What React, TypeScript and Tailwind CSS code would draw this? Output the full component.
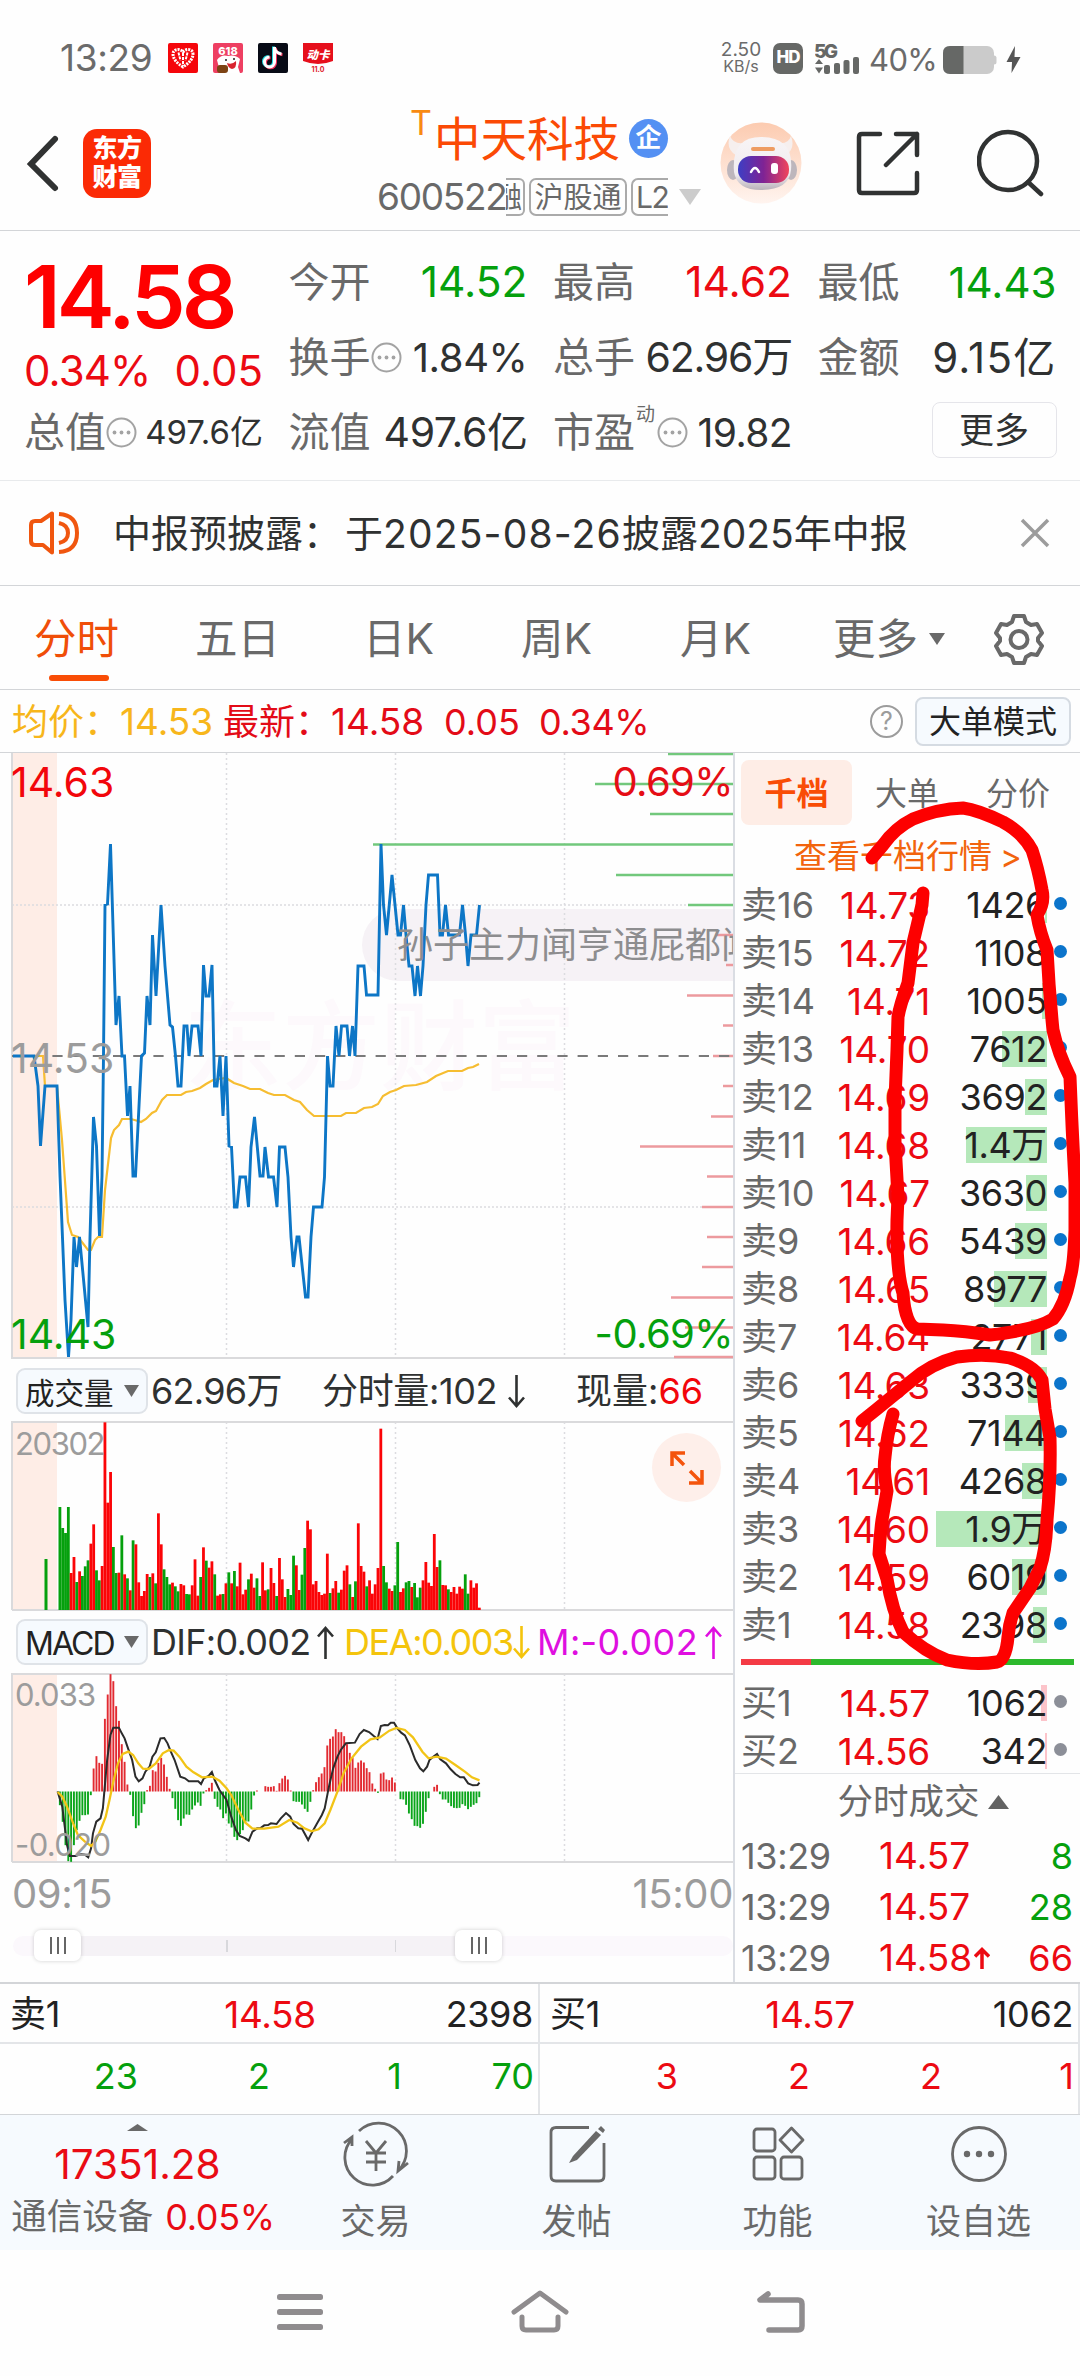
import type { ReactNode } from "react";

const PRICE =
  "13,1056 34,1056 38,1086 40.5,1146 45,1086 57,1086 60,1176 65,1300 68.5,1357 71,1320 74,1237 76.5,1267 79.5,1237 88,1327 90,1237 93.5,1117 96.5,1146 99.5,1236 102,1176 103.5,1056 105,905 107.5,904 110.5,844 116,1025 119,996 122,1056 124.5,1056 127.5,1116 130,1086 133,1176 135.5,1176 141.5,1056 144.5,1053 147,996 150,1025 152.5,935 156,996 161,905 165,966 170,1025 172.5,1027 175.5,1056 178,1086 181,1086 184,1026 187,1026 189,1056 192,1026 198,1026 201,1056 203.5,965 206,996 209,996 212,965 214.5,1086 217,1086 220,1056 223,1116 226,1056 229,1146 231.5,1147 234.5,1207 237,1207 240,1177 245.5,1177 248.5,1207 251,1147 254.5,1117 260,1176 263,1176 265,1147 268.5,1177 273.5,1177 277,1207 279.5,1147 285,1147 288,1177 291,1237 293.5,1267 297,1237 299,1237 305.5,1297 308,1297 311,1237 313.5,1207 322,1207 324.5,1177 327.5,1056 330,1086 333,1086 336,1026 339,1056 341.5,1026 347,1026 349.5,1056 352.5,1026 355,1056 358,966 364,966 366.5,995 378,995 381,844 383.5,905 386.5,935 392,875 398,935 400.5,935 403.5,905 406,935 409,966 412,966 415,996 417.5,966 420.5,996 423,966 426,905 428.5,875 437.5,875 440,935 442.5,935 445.5,905 448.5,935 459.5,935 462.5,905 465.5,935 468,966 471,935 476.5,935 479.5,905";

const AVERAGE =
  "34,1056 43,1056 45,1086 57,1086 62,1140 68,1222 72,1235 78,1237 88,1250 91,1250 95,1240 98,1237 102,1237 105,1190 111,1138 114,1130 119,1125 122,1119 131,1119 138,1121 141,1122 146,1119 152,1113 156,1111 162,1100 167,1095 181,1095 186,1092 192,1091 200,1088 206,1084 213,1080 226,1078 234,1083 243,1086 250,1089 260,1089 268,1093 274,1095 285,1095 294,1100 300,1102 307,1110 314,1116 341,1116 346,1113 356,1113 364,1108 372,1107 378,1104 383,1096 390,1092 396,1090 404,1086 416,1085 427,1082 436,1076 448,1071 462,1071 468,1068 473,1067 479,1064";

// [left edge, y, side]
const LEVELS: [number, number, "s" | "b"][] = [
  [668, 754, "s"], [595, 784, "s"], [650, 814, "s"], [373, 844.5, "s"], [616, 875, "s"], [688, 905, "s"],
  [715, 935, "b"], [726, 965, "b"], [687, 995.5, "b"], [723, 1025.5, "b"], [713, 1056, "b"], [723, 1086, "b"],
  [711, 1116.5, "b"], [640, 1146.5, "b"], [707, 1176.5, "b"], [702, 1207, "b"], [707, 1237, "b"],
  [702, 1267, "b"], [671, 1297.5, "b"], [685, 1327.5, "b"], [674, 1357, "b"],
];

// Bar height per minute; negative marks a falling minute.
const VOLUME = [
  -309, -246, -231, -309, 111, 159, -84, 116, -102, -131, -149, 199, 257, -119, -89, 132, 563, 322, 414, -189,
  -111, 112, -224, 107, -95, 59, -209, 197, 83, 42, 57, 108, -99, 110, -80, 290, 197, -122, -99, -77,
  82, -71, -56, 78, 74, -48, -47, 74, 152, 43, -99, 188, -148, 127, 146, -107, 43, 47, -48, 80,
  -113, 80, -117, 71, 142, 47, 61, -92, 109, 67, -95, -42, 143, 59, -62, 126, 81, -42, 156, 92,
  39, -63, -45, -163, 134, 60, -106, -186, 268, 242, 77, 87, 54, 45, 49, 169, -51, 65, 87, -52,
  61, 118, 134, -77, 39, -86, 260, 132, 115, -71, 89, 49, 77, 126, 544, -132, -83, 64, 57, -74,
  -204, 54, 65, -83, -87, 69, -81, -38, -67, 89, 144, 82, 72, 228, 129, -149, 75, 74, -62, 54,
  69, 49, 70, 64, -107, -49, 89, 67, 80, 7,
];

const MACD = [
  -41, -91, -161, -209, -211, -161, -116, -88, -71, -71, -69, -11, 69, 106, 86, 83, 218, 291, 352, 331,
  256, 212, 142, 89, 21, -10, -74, -110, -102, -64, -38, 4, 17, 64, 60, 86, 101, 81, 44, 8,
  -20, -52, -86, -103, -81, -69, -70, -54, -42, -33, -43, -6, 4, 11, 26, -22, -46, -54, -80, -66,
  -96, -108, -136, -146, -128, -116, -90, -90, -54, -12, 3, 0, 0, 16, 14, 14, 16, 2, 25, 39,
  47, 36, 3, -29, -31, -31, -39, -52, -61, -31, 4, 28, 43, 54, 73, 138, 158, 165, 187, 178,
  178, 166, 142, 116, 102, 71, 87, 93, 87, 70, 58, 24, 8, -4, 54, 57, 36, 34, 42, 27,
  0, -23, -24, -40, -66, -83, -103, -104, -109, -97, -61, -20, 0, 14, 20, -8, -24, -24, -34, -44,
  -49, -50, -49, -38, -43, -53, -46, -40, -35, -17,
];

const DIF =
  "122,574 132,620 142,735 148,768 160,768 172,762 180,764 187,772 193,745 197,700 204,665 213,655 218,625 222,560 227,480 234,405 240,383 252,383 258,400 264,415 270,440 280,480 287,530 294,544 302,535 308,515 317,500 323,470 330,457 340,415 348,414 355,430 362,455 370,480 382,530 392,535 400,544 420,544 426,552 432,535 442,528 449,516 455,540 465,570 480,600 490,650 500,690 508,708 520,715 527,722 535,695 545,685 552,684 560,676 568,675 574,670 586,672 595,655 606,639 615,650 622,672 632,685 640,686 653,720 662,695 672,670 682,645 688,625 697,560 706,505 715,470 722,450 733,430 752,428 762,402 771,390 782,396 792,408 800,417 807,378 815,375 822,376 828,368 835,368 842,385 850,398 858,406 868,435 880,480 890,505 897,514 905,500 910,480 918,470 926,462 933,478 945,490 955,508 965,522 975,532 983,532 992,550 1002,556 1012,555 1016,548";

const DEA =
  "122,576 132,590 142,620 155,670 165,705 180,725 193,738 202,725 213,690 224,650 232,600 240,545 250,490 260,462 272,455 282,465 293,490 303,506 315,507 330,490 345,460 358,450 368,452 380,470 395,500 410,517 428,532 450,530 465,542 480,565 490,585 505,630 520,668 535,686 560,686 590,680 613,660 630,668 645,685 660,694 675,688 688,670 700,630 715,575 728,520 745,475 765,440 785,418 805,412 825,392 840,384 858,390 875,412 895,455 908,475 925,470 945,476 965,495 985,515 1000,532 1016,541";

// [label, price, volume, depth bar width]
const SELLS: [string, string, string, number][] = [
  ["卖16", "14.73", "1426", 2], ["卖15", "14.72", "1108", 2], ["卖14", "14.71", "1005", 5], ["卖13", "14.70", "7612", 45],
  ["卖12", "14.69", "3692", 22], ["卖11", "14.68", "1.4万", 81], ["卖10", "14.67", "3630", 21], ["卖9", "14.66", "5439", 32],
  ["卖8", "14.65", "8977", 53], ["卖7", "14.64", "2771", 16], ["卖6", "14.63", "3339", 19], ["卖5", "14.62", "7144", 42],
  ["卖4", "14.61", "4268", 25], ["卖3", "14.60", "1.9万", 111], ["卖2", "14.59", "6019", 35], ["卖1", "14.58", "2398", 14],
];
const BUYS: [string, string, string, number][] = [
  ["买1", "14.57", "1062", 6], ["买2", "14.56", "342", 2],
];

const LOOP_TOP =
  "M872 858 L883 845 Q895 828 913 819 Q937 809 963 808 Q978 810 1003 822 Q1023 833 1032 850 Q1038 868 1042 890 Q1045 903 1037 915 Q1040 933 1047 950 Q1049 990 1053 1030 Q1058 1053 1070 1077 Q1072 1130 1075 1183 L1075 1230 Q1074 1265 1070 1278 Q1065 1305 1053 1319 Q1035 1330 990 1335 Q965 1331 943 1330 L917 1329 Q905 1325 903 1293 Q896 1270 897 1220 L898 1197 L895 1143 L895 1100 L897 1050 L898 1017 Q900 1005 908 983 L913 943 L922 905 L923 893";
const LOOP_BOTTOM =
  "M862 1421 L877 1409 L910 1382 Q930 1364 957 1357 Q985 1353 1010 1358 Q1035 1366 1042 1380 L1045 1409 L1050 1438 Q1051 1477 1047 1520 Q1046 1550 1040 1568 L1030 1588 L1013 1613 Q1009 1625 1008 1637 Q1006 1660 997 1662 Q975 1666 947 1660 Q925 1652 903 1632 Q892 1610 887 1579 L879 1554 Q880 1535 882 1520 L887 1491 Q883 1470 885 1457 Q887 1435 893 1414";

function Dots() {
  return (
    <svg className="h-[31px] w-[31px] shrink-0" viewBox="0 0 31 31">
      <circle cx="15.5" cy="15.5" r="14" fill="none" stroke="#a3a3a3" strokeWidth="2" />
      <circle cx="8.5" cy="15.5" r="1.9" fill="#a3a3a3" />
      <circle cx="15.5" cy="15.5" r="1.9" fill="#a3a3a3" />
      <circle cx="22.5" cy="15.5" r="1.9" fill="#a3a3a3" />
    </svg>
  );
}

function StatusBar() {
  return (
    <div className="flex h-24 items-center pt-5 pl-[60px] text-[#6b6b6b]">
      <span className="w-[108px] text-[37px] tracking-[-0.01em]">13:29</span>
      <svg className="h-[30px] w-[30px]" viewBox="0 0 30 30">
        <rect width="30" height="30" rx="2" fill="#f5060b" />
        <path d="M15 24 C9 20 5 16 5 11 C5 6 12 5 15 9 C18 5 25 6 25 11 C25 16 21 20 15 24Z" fill="none" stroke="#fff" strokeWidth="3" strokeDasharray="2 1" />
        <path d="M15 10v11M10.500 9.500l2 8M19.500 9.500l-2 8" stroke="#fff" strokeWidth="2" strokeDasharray="3 1" />
      </svg>
      <svg className="ml-[15px] h-[30px] w-[30px]" viewBox="0 0 30 30">
        <rect width="30" height="30" rx="2" fill="#ee3f62" />
        <path d="M4 17 Q8 11 15 13 Q22 11 27 16 L25 24 L27 30 L9 30 Q5 24 4 17Z" fill="#fff" />
        <circle cx="13" cy="17" r="1" fill="#222" /><circle cx="21" cy="16" r="1" fill="#222" />
        <path d="M14 20 Q19 22 23 18 Q24 25 19 26 Q15 25 14 20Z" fill="#d9232f" />
        <rect x="4" y="22" width="11" height="8" rx="3" fill="#7d4314" />
        <text x="15" y="12" textAnchor="middle" fontSize="11" fontWeight="800" fill="#fff">618</text>
      </svg>
      <svg className="ml-[15px] h-[30px] w-[30px]" viewBox="0 0 30 30">
        <rect width="30" height="30" rx="2" fill="#080b16" />
        <g fill="none" strokeWidth="3">
          <path d="M16.500 4v15a5 5 0 1 1-5-5M16.500 5q1 5 7 6" stroke="#25d9e0" transform="translate(-1 -.6)" />
          <path d="M16.500 4v15a5 5 0 1 1-5-5M16.500 5q1 5 7 6" stroke="#f0315b" transform="translate(1 .8)" />
          <path d="M16.500 4v15a5 5 0 1 1-5-5M16.500 5q1 5 7 6" stroke="#fff" />
        </g>
      </svg>
      <svg className="ml-[15px] h-[30px] w-[30px]" viewBox="0 0 30 30">
        <path d="M0 0H30V18Q15 24 0 18Z" fill="#e60f1c" />
        <text x="15" y="16" textAnchor="middle" fontSize="11.500" fontWeight="800" fill="#fff" fontStyle="italic">动卡</text>
        <text x="15" y="29" textAnchor="middle" fontSize="7" fontWeight="700" fill="#e0202c">11.0</text>
      </svg>
      <div className="ml-[388px] flex w-[40px] flex-col items-center leading-none">
        <span className="text-[19px] leading-[17px]">2.50</span>
        <span className="text-[16px] leading-[17px]">KB/s</span>
      </div>
      <div className="ml-[12px] flex h-[31px] w-[30px] items-center justify-center rounded-[7px] bg-[#666866] text-[17px] font-extrabold tracking-[-0.06em] text-white">HD</div>
      <svg className="ml-[12px] h-[31px] w-[44px]" viewBox="0 0 44 31" fill="#666866">
        <text x="-1" y="14.500" fontSize="19" fontWeight="800" textLength="24">5G</text>
        <path d="M0 21h8l-4-5zM0 24.500h8l-4 6z" />
        <rect x="9" y="22" width="6" height="9" rx="2" />
        <rect x="19" y="20" width="6" height="11" rx="2" />
        <rect x="28.500" y="17" width="6" height="14" rx="2" />
        <rect x="38" y="14" width="6" height="17" rx="2" />
      </svg>
      <span className="ml-[10px] w-[68px] pt-1 text-[31px] tracking-[-0.02em]">40%</span>
      <svg className="mt-1 ml-[5px] h-[28px] w-[80px]" viewBox="0 0 80 28">
        <rect x="1" width="51" height="28" rx="7" fill="#cbcbcb" />
        <path d="M8 0H21.500V28H8Q1 28 1 21V7Q1 0 8 0Z" fill="#666866" />
        <path d="M51 9.500h1q2.500 0 2.500 2.500v4q0 2.500-2.500 2.500h-1z" fill="#cbcbcb" />
        <path d="M73 0 64.500 16H70L69.500 27 78.500 11H72.500Z" fill="#555" />
      </svg>
    </div>
  );
}

function Header() {
  return (
    <div className="flex h-[135px] items-center border-b border-[#d3d5d8] pl-[26px]">
      <svg className="h-[60px] w-[34px]" viewBox="0 0 34 60" fill="none" stroke="#303232" strokeWidth="6" strokeLinecap="round">
        <path d="M29 6 5 31 29 55" />
      </svg>
      <div className="ml-[23px] flex h-[69px] w-[68px] flex-col items-center justify-center rounded-[14px] bg-[#fb2a05] text-[25px] leading-[29px] font-black tracking-[-0.02em] text-white">
        <span>东方</span>
        <span>财富</span>
      </div>
      <div className="ml-[226px] flex w-[343px] flex-col gap-[10px]">
        <div className="flex h-[58px] items-center pl-[33px]">
          <span className="self-start text-[34px] leading-[28px] text-[#f88a12]">T</span>
          <span className="ml-[2px] pt-[2px] text-[46.500px] leading-none text-[#fb4a05]">中天科技</span>
          <span className="ml-[9px] flex h-[39px] w-[39px] items-center justify-center rounded-full bg-[#5490f3] text-[26px] leading-none font-bold text-white">企</span>
        </div>
        <div className="flex h-[40px] items-center text-[#696969]">
          <span className="w-[129px] text-[37px] tracking-[-0.035em]">600522</span>
          <span className="flex h-[38px] w-[19px] items-center justify-end overflow-hidden rounded-r-[6px] border-y-2 border-r-2 border-[#aaa] pr-[1px] text-[29px] leading-none">融</span>
          <span className="ml-[4px] flex h-[38px] w-[98px] items-center justify-center rounded-[7px] border-2 border-[#aaa] text-[29px] leading-none">沪股通</span>
          <span className="ml-[4px] flex h-[38px] w-[37px] items-center overflow-hidden rounded-l-[7px] border-y-2 border-l-2 border-[#aaa] pl-[3px] text-[30px] leading-none tracking-[-0.05em]">L2</span>
          <svg className="ml-[11px] h-[16px] w-[22px]" viewBox="0 0 22 16"><path d="M0 0H22L11 16Z" fill="#ccc" /></svg>
        </div>
      </div>
      <svg className="h-[82px] w-[82px]" viewBox="0 0 82 82">
        <defs>
          <linearGradient id="halo" x1="0" y1="0" x2="0" y2="1"><stop offset="0" stopColor="#fccbb0" /><stop offset="1" stopColor="#fff4ef" /></linearGradient>
          <linearGradient id="visor"><stop offset="0" stopColor="#3d3ec4" /><stop offset=".5" stopColor="#7f2394" /><stop offset="1" stopColor="#f1455c" /></linearGradient>
          <linearGradient id="shell" x1="0" y1="0" x2="0" y2="1"><stop offset="0" stopColor="#f8f4f5" /><stop offset=".7" stopColor="#f0ecf0" /><stop offset="1" stopColor="#b9b2ba" /></linearGradient>
        </defs>
        <circle cx="41" cy="41" r="40.500" fill="url(#halo)" />
        <path d="M10 14Q5 27 17 34L28 20Q14 24 10 14ZM71 14Q76 27 65 34L54 20Q68 24 71 14Z" fill="#f6efee" />
        <ellipse cx="13" cy="48" rx="6" ry="10" fill="#bdb6bc" /><ellipse cx="71" cy="48" rx="6" ry="10" fill="#bdb6bc" />
        <path d="M14 50Q11 15 41 15Q74 15 71 48Q69 68 41 68Q17 68 14 50Z" fill="url(#shell)" />
        <rect x="18" y="34" width="51" height="27" rx="13" fill="url(#visor)" />
        <path d="M31 50q4-8 8 0" stroke="#fff" strokeWidth="2.500" fill="none" strokeLinecap="round" />
        <rect x="51" y="41" width="7" height="11" rx="3" fill="#fff" />
        <path d="M33 27h20" stroke="#ee9c62" strokeWidth="4" strokeLinecap="round" />
      </svg>
      <svg className="ml-[54px] h-[66px] w-[64px]" viewBox="0 0 64 66" fill="none" stroke="#303232" strokeWidth="4.500" strokeLinecap="round" strokeLinejoin="round">
        <path d="M24 4H6Q3 4 3 7V60Q3 63 6 63H58Q61 63 61 60V43M40 4H61V25M61 4 30 35" />
      </svg>
      <svg className="ml-[57px] h-[68px] w-[68px]" viewBox="0 0 68 68" fill="none" stroke="#303232" strokeWidth="4.500" strokeLinecap="round">
        <circle cx="31" cy="32" r="29" /><path d="M51 53 64 65" />
      </svg>
    </div>
  );
}

function Cell({ label, extra, value, tone = "text-[#2f3131]", size = "text-[41px] tracking-[-0.01em]" }: { label: string; extra?: ReactNode; value: string; tone?: string; size?: string }) {
  return (
    <div className="flex h-[75px] items-center whitespace-nowrap">
      <span className="text-[41px] text-[#696969]">{label}</span>
      {extra}
      <span className={`ml-auto ${tone} ${size}`}>{value}</span>
    </div>
  );
}

function Quote() {
  return (
    <div className="grid h-[250px] grid-cols-[239px_239px_239px_239px] gap-x-[25.500px] border-b border-[#e8eaec] pt-[14px] pl-[24px] leading-none">
      <div>
        <div className="flex h-[105px] items-center pb-[2px] text-[87px] font-semibold tracking-[-0.045em] text-[#fe0000]">14.58</div>
        <div className="flex h-[45px] items-center justify-between pb-[3px] text-[42px] text-[#ec0a12]"><span className="tracking-[-0.02em]">0.34%</span><span>0.05</span></div>
        <Cell label="总值" extra={<Dots />} value="497.6亿" size="text-[33px] tracking-[0em]" />
      </div>
      <div>
        <Cell label="今开" value="14.52" tone="text-[#05a00d]" size="text-[42.500px]" />
        <Cell label="换手" extra={<Dots />} value="1.84%" size="text-[40px] tracking-[-0.01em]" />
        <Cell label="流值" value="497.6亿" />
      </div>
      <div>
        <Cell label="最高" value="14.62" tone="text-[#ec0a12]" size="text-[42.500px]" />
        <Cell label="总手" value="62.96万" size="text-[41px] tracking-[-0.03em]" />
        <Cell label="市盈" extra={<><span className="-mt-9 ml-[1px] text-[19px] text-[#696969]">动</span><span className="ml-[2px] flex"><Dots /></span></>} value="19.82" size="text-[39px] tracking-[-0.015em]" />
      </div>
      <div>
        <Cell label="最低" value="14.43" tone="text-[#05a00d]" size="text-[42px] tracking-[0em]" />
        <Cell label="金额" value="9.15亿" size="text-[42px] tracking-[0.03em]" />
        <div className="flex h-[75px] items-center justify-end">
          <span className="-mt-[5px] flex h-[56px] w-[125px] items-center justify-center rounded-[8px] border-[1.500px] border-[#e5e5ea] text-[35px] text-[#2f3131]">更多</span>
        </div>
      </div>
    </div>
  );
}

function Notice() {
  return (
    <div className="flex h-[105px] items-center border-b border-[#d3d5d8] pl-[29px] leading-none">
      <svg className="h-[44px] w-[51px]" viewBox="0 0 51 44" fill="none" stroke="#f0560f" strokeWidth="4">
        <path d="M23 2.500V41.500L14 34H6Q2 34 2 30V14Q2 10 6 10H12Z" strokeLinejoin="round" />
        <path d="M30 12Q39 14 39 22Q39 30 30 32M30 3Q48 4 48 22Q48 40 30 41" />
      </svg>
      <span className="ml-[33px] flex items-center text-[38px] whitespace-nowrap text-[#2f3131]">
        中报预披露：<span className="ml-[4px]">于</span>
        <span className="text-[39px] tracking-[0.03em]">2025-08-26</span>披露
        <span className="text-[39px]">2025</span>年中报
      </span>
      <svg className="ml-auto mr-[30px] h-[30px] w-[30px]" viewBox="0 0 30 30" stroke="#9c9c9c" strokeWidth="3.500"><path d="M2 2 28 28M28 2 2 28" /></svg>
    </div>
  );
}

function Tabs() {
  return (
    <div className="flex h-[104px] items-center border-b border-[#d3d5d8] pt-[3px] text-[42.500px] leading-none whitespace-nowrap text-[#696969]">
      <div className="relative ml-[34px] w-[161px] text-[#f04e08]">
        分时
        <span className="absolute top-[57px] left-[15px] h-[6px] w-[60px] rounded-full bg-[#f94d06]" />
      </div>
      <span className="w-[168px]">五日</span>
      <span className="w-[158px]">日K</span>
      <span className="w-[159px]">周K</span>
      <span className="w-[153px]">月K</span>
      <span>更多</span>
      <svg className="ml-[11px] h-[12px] w-[16px]" viewBox="0 0 16 12"><path d="M0 0H16L8 12Z" fill="#696969" /></svg>
      <svg className="ml-[48px] h-[52px] w-[52px]" viewBox="0 0 52 52" fill="none" stroke="#696969" strokeWidth="4" strokeLinejoin="round">
        <path d="M21 3H31L33 9 38 12 44 11 49 20 45 25V28L49 33 44 42 38 41 33 44 31 50H21L19 44 14 41 8 42 3 33 7 28V25L3 20 8 11 14 12 19 9Z" />
        <circle cx="26" cy="26.500" r="8.500" />
      </svg>
    </div>
  );
}

function InfoRow() {
  return (
    <div className="flex h-[63px] items-center border-b border-[#d3d5d8] pt-px pl-[12px] text-[36px] leading-none whitespace-nowrap text-[#e30b17]">
      <span className="text-[#f7b61b]">均价：</span>
      <span className="w-[103px] text-[37px] text-[#f7b61b]">14.53</span>
      <span>最新：</span>
      <span className="w-[113px] text-[37px]">14.58</span>
      <span className="w-[95px]">0.05</span>
      <span className="tracking-[-0.01em]">0.34%</span>
      <span className="ml-auto flex h-[33px] w-[33px] items-center justify-center rounded-full border-[2.500px] border-[#9c9c9c] text-[25px] text-[#9c9c9c]">?</span>
      <span className="mr-[9px] ml-[12px] flex h-[49px] w-[156px] items-center justify-center rounded-[8px] border-2 border-[#d5dbe2] bg-[#f6fafe] text-[32px] text-[#222]">大单模式</span>
    </div>
  );
}

function Grid({ top, bottom }: { top: number; bottom: number }) {
  return (
    <>
      <rect x="12" y={top} width="45" height={bottom - top} fill="#feede6" />
      <path d={`M226.500 ${top}V${bottom}M395.500 ${top}V${bottom}M564.500 ${top}V${bottom}`} stroke="#dcdce0" strokeWidth="1.500" strokeDasharray="2 3" />
    </>
  );
}

function Picker({ children }: { children: ReactNode }) {
  return (
    <span className="flex h-[46px] w-[132px] shrink-0 items-center justify-between rounded-[9px] border-2 border-[#dfe3e8] bg-[#f6fafe] pr-[7px] pl-[7px] text-[#222]">
      <span>{children}</span>
      <svg className="h-[12px] w-[15px]" viewBox="0 0 15 12"><path d="M0 0H15L7.500 12Z" fill="#696969" /></svg>
    </span>
  );
}

function Arrow({ up }: { up?: boolean }) {
  return (
    <svg className={up ? "h-[33px] w-[17px]" : "h-[33px] w-[17px] rotate-180"} viewBox="0 0 17 33" fill="none" stroke="currentColor" strokeWidth="2.600">
      <path d="M8.500 33V2M1 10.500 8.500 2 16 10.500" />
    </svg>
  );
}

function Handle() {
  return (
    <span className="z-10 flex h-[31px] w-[47px] items-center justify-center gap-[5px] rounded-[7px] bg-white shadow-[0_0_4px_rgba(0,0,0,0.18)]">
      <i className="h-[17px] w-[2px] bg-[#666]" />
      <i className="h-[17px] w-[2px] bg-[#666]" />
      <i className="h-[17px] w-[2px] bg-[#666]" />
    </span>
  );
}

function Charts() {
  return (
    <div className="w-[735px] shrink-0 border-r-2 border-[#dadde3] leading-none">
      <div className="relative h-[606px] overflow-hidden">
        <div className="absolute top-[245px] left-[184px] text-[98px] font-medium text-[#fdf9fc]">东方财富</div>
        <div className="absolute top-[156px] left-[362px] h-[72px] w-[420px] rounded-full bg-[#f6f2f6]" />
        <svg className="absolute inset-0 h-[606px] w-[733px]" viewBox="0 753 733 606" fill="none">
          <Grid top={753} bottom={1358} />
          <path d="M12 905H733M12 1207H733" stroke="#dcdce0" strokeWidth="1.500" strokeDasharray="2 2" />
          <path d="M12 753V1358H733" stroke="#dadadc" strokeWidth="2" />
          {LEVELS.map(([x, y, side]) => (
            <path key={y} d={`M${x} ${y}H733`} stroke={side === "s" ? "#72c87c" : "#ec9a9e"} strokeWidth="2.500" />
          ))}
          <path d="M12 1056H733" stroke="#7a7a7a" strokeWidth="2" strokeDasharray="10.200 10" />
          <polyline points={AVERAGE} stroke="#f6bd31" strokeWidth="2.200" />
          <polyline points={PRICE} stroke="#0d76c6" strokeWidth="2.900" />
        </svg>
        <span className="absolute top-[174px] left-[397px] text-[36px] whitespace-nowrap text-[#8d8d8f]">孙子主力闻亨通屁都闻</span>
        <span className="absolute top-[9px] left-[11px] text-[41px] text-[#f2060b]">14.63</span>
        <span className="absolute top-[9px] right-0 text-[40px] tracking-[-0.015em] text-[#e50d15]">0.69%</span>
        <span className="absolute top-[285px] left-[11px] text-[41px] text-[#9c9c9c]">14.53</span>
        <span className="absolute top-[561px] left-[11px] text-[41px] text-[#05a00d]">14.43</span>
        <span className="absolute top-[561px] right-0 text-[40px] tracking-[-0.015em] text-[#05a00d]">-0.69%</span>
      </div>

      <div className="flex h-[62px] items-center pt-[2px] pl-[16px] text-[36px] whitespace-nowrap text-[#2f3131]">
        <Picker><span className="text-[29.500px]">成交量</span></Picker>
        <span className="ml-[3px] w-[171px] tracking-[-0.02em]">62.96万</span>
        <span className="flex w-[254px] items-center tracking-[-0.01em]">分时量:102<span className="ml-[11px] flex"><Arrow /></span></span>
        <span>现量:</span><span className="text-[#f2060b]">66</span>
      </div>

      <div className="relative h-[190px]">
        <svg className="absolute inset-0 h-[190px] w-[733px]" viewBox="0 1421 733 190" fill="none">
          <Grid top={1422} bottom={1609} />
          <path d="M12 1610V1422H733M12 1610H733" stroke="#dadadc" strokeWidth="2" />
          <rect x="44.500" y="1559" width="3" height="51" fill="#05a00d" />
          {VOLUME.map((v, i) => {
            const h = Math.abs(v) / 3;
            return <rect key={i} x={58.5 + i * 2.815} y={1610 - h} width="2.800" height={h} fill={v > 0 ? "#fb0407" : "#05a00d"} />;
          })}
        </svg>
        <span className="absolute top-[7px] left-[15px] text-[31px] tracking-[-0.045em] text-[#9c9c9c]">20302</span>
        <span className="absolute top-[12px] left-[652px] flex h-[69px] w-[69px] items-center justify-center rounded-full bg-[#feefea]">
          <svg className="h-[34px] w-[34px]" viewBox="0 0 34 34" fill="none" stroke="#f4540c" strokeWidth="3.500"><path d="M2 15V2H15M2 2 14 14M32 19V32H19M32 32 20 20" /></svg>
        </span>
      </div>

      <div className="flex h-[62px] items-center pl-[16px] text-[36px] tracking-[-0.02em] whitespace-nowrap">
        <Picker><span className="text-[32px] tracking-[-0.06em]">MACD</span></Picker>
        <span className="ml-[3px] flex w-[193px] items-center text-[#2f3131]">DIF:0.002<span className="ml-auto mr-[10px] flex"><Arrow up /></span></span>
        <span className="flex w-[193px] items-center tracking-[-0.04em] text-[#f4c40c]">DEA:0.003<span className="ml-auto mr-[11px] flex"><Arrow /></span></span>
        <span className="flex w-[185px] items-center tracking-[0.01em] text-[#df0fe0]">M:-0.002<span className="ml-auto flex"><Arrow up /></span></span>
      </div>

      <div className="relative h-[190px]">
        <svg className="absolute inset-0 h-[190px] w-[733px]" viewBox="0 1673 733 190" fill="none">
          <Grid top={1674} bottom={1861} />
          <path d="M12 1862V1674H733M12 1862H733" stroke="#dadadc" strokeWidth="2" />
          {MACD.map((v, i) => {
            const h = Math.abs(v) / 3;
            return <rect key={i} x={58.9 + i * 2.815} y={v > 0 ? 1791.5 - h : 1791.5} width="1.900" height={h} fill={v > 0 ? "#e22a31" : "#0aa51a"} />;
          })}
          <g transform="translate(0 1600) scale(.47193 .33333)">
            <polyline points={DIF} stroke="#2b2b2b" strokeWidth="2" vectorEffect="non-scaling-stroke" />
            <polyline points={DEA} stroke="#f2c416" strokeWidth="2.300" vectorEffect="non-scaling-stroke" />
          </g>
        </svg>
        <span className="absolute top-[6px] left-[15px] text-[31px] tracking-[-0.03em] text-[#9c9c9c]">0.033</span>
        <span className="absolute top-[156px] left-[15px] text-[31px] tracking-[-0.02em] text-[#9c9c9c]">-0.020</span>
      </div>

      <div className="flex h-[62px] items-center justify-between pl-[12px] text-[40px] tracking-[-0.01em] text-[#9c9c9c]">
        <span>09:15</span><span>15:00</span>
      </div>
      <div className="mt-[5px] flex h-[31px] items-center pl-[13px]">
        <span className="h-5 w-[21px] rounded-l-full bg-[#fbf8fc]" />
        <Handle />
        <span className="-ml-1 flex h-5 w-[384px] items-center bg-[#f5f2f6]">
          <i className="ml-[149px] h-3 w-[1.500px] bg-[#d8d8dc]" />
          <i className="ml-[167px] h-3 w-[1.500px] bg-[#d8d8dc]" />
        </span>
        <span className="-ml-[6px] flex"><Handle /></span>
        <span className="h-5 flex-1 rounded-r-full bg-[#fbf8fc]" />
      </div>
    </div>
  );
}

function Order({ row, sell }: { row: [string, string, string, number]; sell?: boolean }) {
  const [label, price, volume, bar] = row;
  return (
    <div className="flex h-12 items-center whitespace-nowrap">
      <span className="w-[88px] pb-[2px] text-[#696969]">{label}</span>
      <span className="w-[101px] pb-[2px] text-right text-[37px] tracking-[-0.005em] text-[#ec0a12]">{price}</span>
      <span className="relative mb-[2px] flex h-[36px] w-[117px] items-center justify-end tracking-[-0.01em] text-[#222]">
        <i className={sell ? "absolute top-0 right-0 h-full bg-[#b5e8ba]" : "absolute top-0 right-0 h-full bg-[#fcc4ca]"} style={{ width: bar }} />
        <span className="relative">{volume}</span>
      </span>
      <i className={sell ? "mb-[5px] ml-[7px] h-[13px] w-[13px] rounded-full bg-[#0b74cb]" : "mb-[5px] ml-[7px] h-[13px] w-[13px] rounded-full bg-[#8c8f98]"} />
    </div>
  );
}

function OrderBook() {
  return (
    <div className="flex-1 text-[36px] leading-none">
      <div className="flex h-[77px] items-center pt-[2px] pl-[6px] text-[32px] text-[#696969]">
        <span className="flex h-[65px] w-[111px] items-center justify-center rounded-[8px] bg-[#feede6] pt-[2px] font-bold text-[#f94d06]">千档</span>
        <span className="ml-[23px] pt-[2px]">大单</span>
        <span className="ml-[47px] pt-[2px]">分价</span>
      </div>
      <div className="flex h-[52px] items-center pl-[59px] text-[33px] whitespace-nowrap text-[#f2640d]">查看千档行情<span className="ml-2">&gt;</span></div>
      <div className="pl-[6px]">
        {SELLS.map((r) => <Order key={r[0]} row={r} sell />)}
      </div>
      <div className="mt-[9px] flex h-[6px] pr-[6px] pl-[6px]">
        <i className="w-[70px] bg-[#f43b45]" />
        <i className="flex-1 bg-[#2db92d]" />
      </div>
      <div className="mt-[15px] pl-[6px]">
        {BUYS.map((r) => <Order key={r[0]} row={r} />)}
      </div>
      <div className="-mt-[3px] flex h-[57px] items-center justify-center border-t border-[#e3e5e8] pb-[1px] pl-[31px] text-[35.500px] text-[#696969]">
        分时成交
        <svg className="ml-[8px] h-[14px] w-[21px]" viewBox="0 0 21 14"><path d="M10.500 0 21 14H0Z" fill="#636363" /></svg>
      </div>
      {[["14.57", "8"], ["14.57", "28"], ["14.58", "66"]].map(([p, v], i) => (
        <div key={i} className="flex h-[51px] items-center pl-[6px]">
          <span className="w-[138px] tracking-[-0.01em] text-[#696969]">13:29</span>
          <span className="flex items-center text-[37px] text-[#ec0a12]">
            {p}
            {i === 2 && (
              <svg className="ml-[2px] h-[22px] w-[16px]" viewBox="0 0 16 22" fill="none" stroke="currentColor" strokeWidth="3.500"><path d="M8 22V3M1 9.500 8 2.500 15 9.500" /></svg>
            )}
          </span>
          <span className={i === 2 ? "mr-[7px] ml-auto text-[#ec0a12]" : "mr-[7px] ml-auto text-[#05a00d]"}>{v}</span>
        </div>
      ))}
    </div>
  );
}

function DepthHalf({ label, price, volume, queue, tone }: { label: string; price: string; volume: string; queue: string[]; tone: string }) {
  return (
    <div className="w-[540px] border-r-2 border-[#e3e5e8]">
      <div className="grid h-[60px] grid-cols-3 items-center border-b-2 border-[#e3e5e8] pt-[2px] pr-[5px] pl-[10px] tracking-[-0.01em] text-[#222]">
        <span>{label}</span>
        <span className="pr-[3px] text-center text-[37px] text-[#ec0a12]">{price}</span>
        <span className="text-right">{volume}</span>
      </div>
      <div className={`grid h-[71px] grid-cols-[repeat(4,132px)] items-center pb-[7px] pl-[6px] text-right ${tone}`}>
        {queue.map((q, i) => <span key={i}>{q}</span>)}
      </div>
    </div>
  );
}

function NavItem({ label, children }: { label: string; children: ReactNode }) {
  return (
    <div className="flex w-[201px] flex-col items-center pt-[6px]">
      <svg className="h-[66px] w-[70px]" viewBox="0 0 70 66" fill="none" stroke="#696969" strokeWidth="2.800">{children}</svg>
      <span className="mt-[17px] text-[35px]">{label}</span>
    </div>
  );
}

function BottomNav() {
  return (
    <div className="flex h-[135px] bg-[#f6fafe] leading-none whitespace-nowrap text-[#696969]">
      <div className="flex w-[275px] flex-col items-center pt-[9px]">
        <svg className="h-[7px] w-[21px]" viewBox="0 0 21 7"><path d="M10.500 0 21 7H0Z" fill="#696969" /></svg>
        <span className="mt-[14px] text-[40.500px] tracking-[0em] text-[#e90b14]">17351.28</span>
        <span className="mt-[13px] flex items-center pl-[11px] text-[35.500px]">通信设备<span className="ml-[12px] text-[36px] tracking-[-0.01em] text-[#e90b14]">0.05%</span></span>
      </div>
      <NavItem label="交易">
        <path d="M18 10A27 27 0 0 1 57 50M52 55A27 27 0 0 1 11 18M3 22 11 16V25M67 42 57 50 58 40M25 20 35 32 45 20M25 32H45M25 41H45M35 32V50" />
      </NavItem>
      <NavItem label="发帖">
        <path d="M47 6.500H14Q9 6.500 9 11.500V55Q9 60 14 60H57Q62 60 62 55V22" />
        <path d="M31 35 54 10 59 14 35 39 27 42Z" fill="#696969" stroke="none" />
        <path d="M56 8 59 5 63 9 61 12Z" fill="#696969" stroke="none" />
      </NavItem>
      <NavItem label="功能">
        <rect x="11" y="8" width="21" height="22" rx="3" /><rect x="11" y="36" width="21" height="22" rx="3" /><rect x="38" y="36" width="21" height="22" rx="3" /><path d="M48.500 7 60 19 48.500 31 37 19Z" strokeLinejoin="round" />
      </NavItem>
      <NavItem label="设自选">
        <circle cx="35" cy="33" r="26.500" />
        <g fill="#696969" stroke="none"><circle cx="23" cy="33" r="3.200" /><circle cx="35" cy="33" r="3.200" /><circle cx="47" cy="33" r="3.200" /></g>
      </NavItem>
    </div>
  );
}

function SystemBar() {
  return (
    <div className="flex h-[126px] items-center pb-[2px] pl-[277px]">
      <svg className="h-[38px] w-[46px]" viewBox="0 0 46 38" fill="#8f8c8e"><rect width="46" height="6" rx="2.500" y="1" /><rect width="46" height="6" rx="2.500" y="16" /><rect width="46" height="6" rx="2.500" y="31" /></svg>
      <svg className="ml-[187px] h-[44px] w-[60px]" viewBox="0 0 60 44" fill="none" stroke="#8f8c8e" strokeWidth="5" strokeLinecap="round" strokeLinejoin="round"><path d="M4 22 30 3 56 22M12 27V36Q12 40 16 40H44Q48 40 48 36V27" /></svg>
      <svg className="ml-[186px] h-[44px] w-[50px]" viewBox="0 0 50 44" fill="none" stroke="#8f8c8e" strokeWidth="5.500" strokeLinecap="round" strokeLinejoin="round"><path d="M12 4 4 10H42Q46 10 46 14V36Q46 40 42 40H13" /></svg>
    </div>
  );
}

export default function App() {
  return (
    <div className="relative h-[2376px] w-[1080px] overflow-hidden bg-[#fefefe] font-['Inter','Noto_Sans_CJK_SC',sans-serif]">
      <StatusBar />
      <Header />
      <Quote />
      <Notice />
      <Tabs />
      <InfoRow />
      <div className="flex h-[1231px] border-b-2 border-[#d3d5d8]">
        <Charts />
        <OrderBook />
      </div>
      <div className="flex h-[131px] border-b border-[#d3d5d8] text-[36px] leading-none">
        <DepthHalf label="卖1" price="14.58" volume="2398" queue={["23", "2", "1", "70"]} tone="text-[#05a00d]" />
        <DepthHalf label="买1" price="14.57" volume="1062" queue={["3", "2", "2", "1"]} tone="text-[#ec0a12]" />
      </div>
      <BottomNav />
      <SystemBar />
      <svg className="pointer-events-none absolute top-0 left-0 h-[2376px] w-[1080px]" viewBox="0 0 1080 2376" fill="none" stroke="#fd0000" strokeWidth="13" strokeLinecap="round" strokeLinejoin="round">
        <path d={LOOP_TOP} />
        <path d={LOOP_BOTTOM} />
      </svg>
    </div>
  );
}
